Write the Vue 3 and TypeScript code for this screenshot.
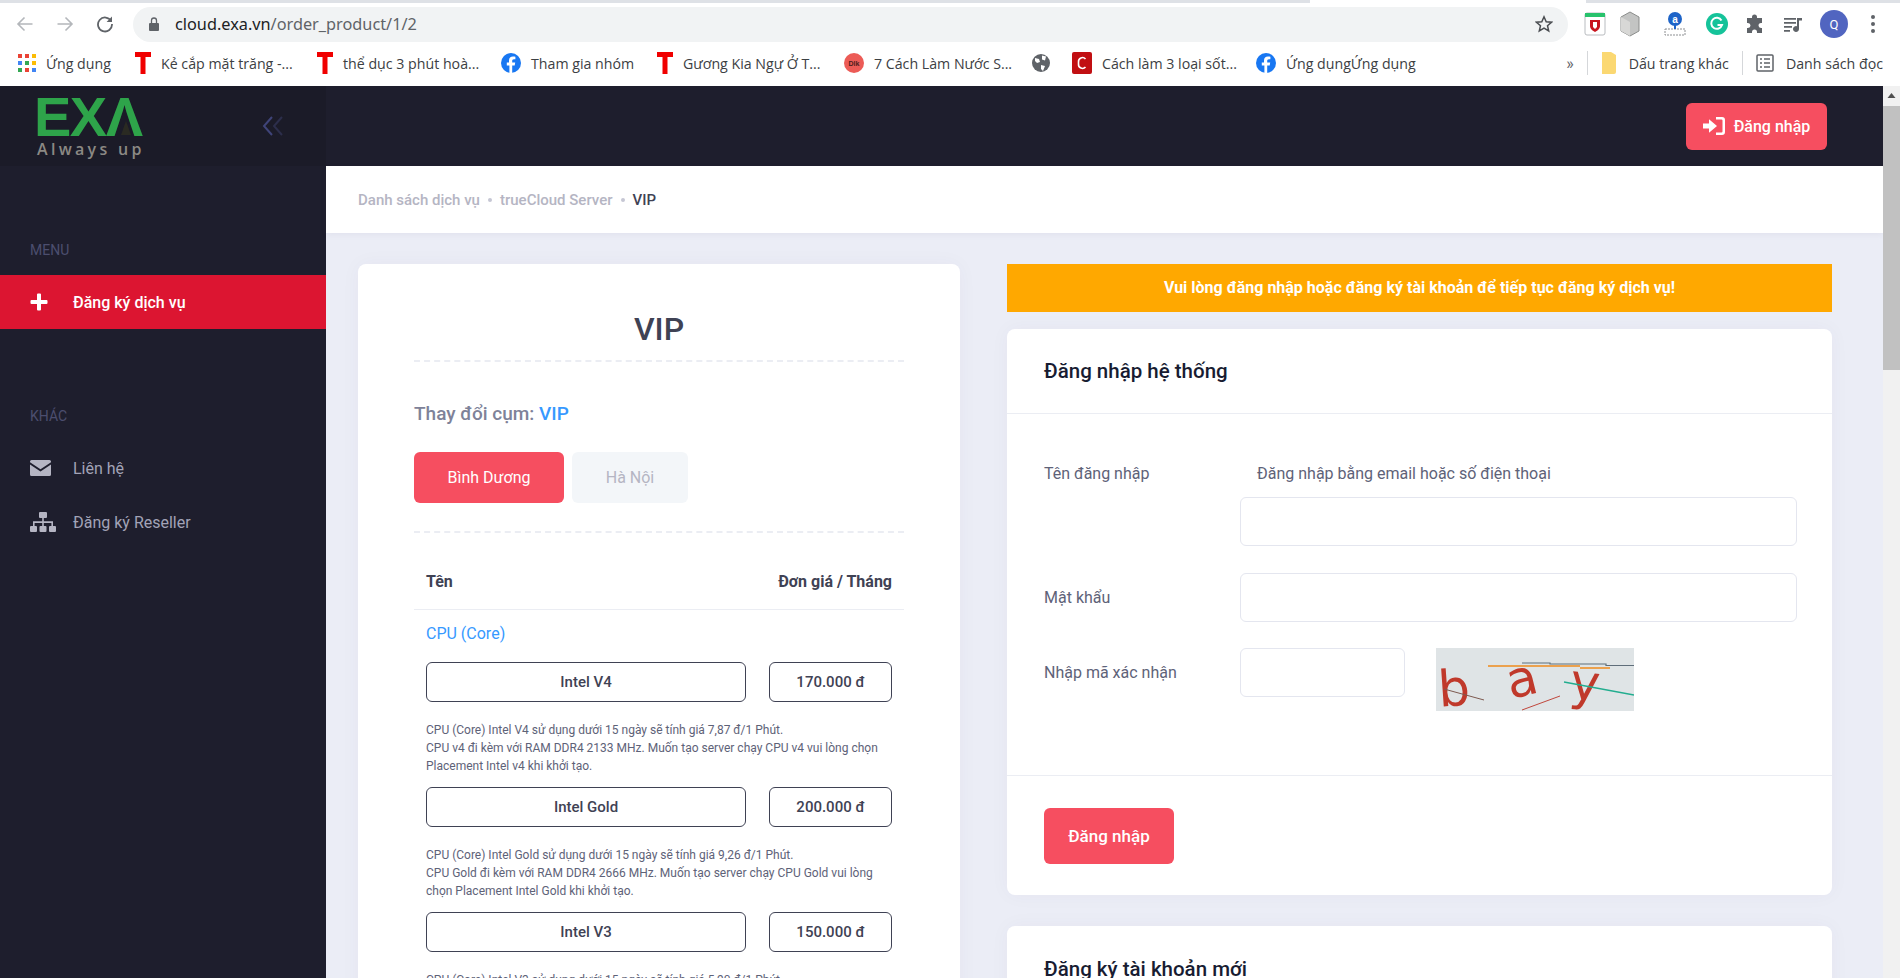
<script setup lang="ts">
type Bookmark = { icon: string; label: string; width: number }
type CpuOption = { name: string; price: string; desc: string[] }

const bookmarks: Bookmark[] = [
  { icon: 'apps', label: 'Ứng dụng', width: 67 },
  { icon: 't', label: 'Kẻ cắp mặt trăng -...', width: 134 },
  { icon: 't', label: 'thể dục 3 phút hoà...', width: 136 },
  { icon: 'fb', label: 'Tham gia nhóm', width: 104 },
  { icon: 't', label: 'Gương Kia Ngự Ở T...', width: 139 },
  { icon: 'dlk', label: '7 Cách Làm Nước S...', width: 136 },
  { icon: 'globe', label: '', width: 0 },
  { icon: 'c', label: 'Cách làm 3 loại sốt...', width: 132 },
  { icon: 'fb', label: 'Ứng dụngỨng dụng', width: 134 },
]

const cpuOptions: CpuOption[] = [
  {
    name: 'Intel V4',
    price: '170.000 đ',
    desc: [
      'CPU (Core) Intel V4 sử dụng dưới 15 ngày sẽ tính giá 7,87 đ/1 Phút.',
      'CPU v4 đi kèm với RAM DDR4 2133 MHz. Muốn tạo server chạy CPU v4 vui lòng chọn Placement Intel v4 khi khởi tạo.',
    ],
  },
  {
    name: 'Intel Gold',
    price: '200.000 đ',
    desc: [
      'CPU (Core) Intel Gold sử dụng dưới 15 ngày sẽ tính giá 9,26 đ/1 Phút.',
      'CPU Gold đi kèm với RAM DDR4 2666 MHz. Muốn tạo server chạy CPU Gold vui lòng chọn Placement Intel Gold khi khởi tạo.',
    ],
  },
  {
    name: 'Intel V3',
    price: '150.000 đ',
    desc: [
      'CPU (Core) Intel V3 sử dụng dưới 15 ngày sẽ tính giá 5,90 đ/1 Phút.',
    ],
  },
]
</script>

<template>
  <div class="window">
    <div class="tabstrip">
      <span class="tab-line"></span>
      <span class="tab-gap"></span>
      <span class="tab-line short"></span>
    </div>

    <div class="toolbar">
      <div class="nav">
        <svg width="18" height="18" viewBox="0 0 18 18" fill="none" stroke="#b4b7bb" stroke-width="1.6">
          <path d="M16.500 9H2M8.500 2.500 2 9l6.500 6.500" />
        </svg>
        <svg width="18" height="18" viewBox="0 0 18 18" fill="none" stroke="#b4b7bb" stroke-width="1.6">
          <path d="M1.500 9H16M9.500 2.500 16 9l-6.500 6.500" />
        </svg>
        <svg width="18" height="18" viewBox="0 0 18 18" fill="none" stroke="#5f6368" stroke-width="1.8">
          <path d="M15.200 6.200A7 7 0 1 0 16 9" />
          <path d="M16 1.500v5.400h-5.400" fill="#5f6368" stroke="none" />
        </svg>
      </div>
      <div class="omnibox">
        <svg width="10" height="14" viewBox="0 0 10 14" fill="#5f6368">
          <path d="M1 6h8a1 1 0 0 1 1 1v6a1 1 0 0 1-1 1H1a1 1 0 0 1-1-1V7a1 1 0 0 1 1-1z" />
          <path d="M2.500 6V3.500a2.500 2.500 0 0 1 5 0V6" fill="none" stroke="#5f6368" stroke-width="1.300" />
        </svg>
        <span class="url"><b>cloud.exa.vn</b>/order_product/1/2</span>
        <svg class="star" width="18" height="18" viewBox="0 0 18 18" fill="none" stroke="#4a4d51" stroke-width="1.500">
          <path d="M9 1.800l2.200 4.900 5.300.5-4 3.500 1.200 5.200L9 13.200l-4.700 2.700 1.200-5.200-4-3.500 5.300-.5z" />
        </svg>
      </div>
      <div class="extensions">
        <svg width="22" height="24" viewBox="0 0 22 24">
          <rect x="1" y="1" width="20" height="22" rx="2" fill="#fff" stroke="#b9bcc0" />
          <rect x="1" y="1" width="20" height="4" fill="#27c26c" />
          <path d="M6 8h10v6c0 3-3 5-5 6-2-1-5-3-5-6z" fill="#c8141e" />
          <path d="M9 10h4v5l-2 2-2-2z" fill="#fff" />
        </svg>
        <svg width="22" height="26" viewBox="0 0 22 26">
          <path d="M11 1l9 5v14l-9 5-9-5V6z" fill="#c3c4c3" stroke="#8b8d8b" />
          <path d="M11 11v14l-9-5V6z" fill="#d8d8d6" />
        </svg>
        <svg width="22" height="26" viewBox="0 0 22 26">
          <circle cx="11" cy="8" r="7" fill="#1e64c8" />
          <text x="11" y="12" text-anchor="middle" class="ext-a">a</text>
          <path d="M1 18h20v6H1z" fill="none" stroke="#8d8f92" stroke-dasharray="2 1" />
          <path d="M11 14v4" stroke="#1e64c8" stroke-width="2" />
        </svg>
        <svg width="22" height="24" viewBox="0 0 22 24">
          <circle cx="11" cy="12" r="11" fill="#15c39a" />
          <path d="M15.500 8.500A5.500 5.500 0 1 0 16 13h-4.500" fill="none" stroke="#fff" stroke-width="2" />
        </svg>
        <svg width="20" height="20" viewBox="0 0 20 20" fill="#5f6368">
          <path d="M7 3a2.500 2.500 0 0 1 5 0v1h5v5h-1a2.500 2.500 0 0 0 0 5h1v5h-5v-1a2.500 2.500 0 0 0-5 0v1H2v-5h1a2.500 2.500 0 0 0 0-5H2V4h5z" />
        </svg>
        <svg width="20" height="20" viewBox="0 0 20 20" fill="#5f6368">
          <path d="M1 4h12v1.800H1zM1 8h12v1.800H1zM1 12h8v1.800H1zM1 16h6v1.800H1z" />
          <path d="M14 4h5v2.500h-3V15a3 3 0 1 1-2-2.800z" />
        </svg>
        <span class="avatar">Q</span>
        <svg width="6" height="20" viewBox="0 0 6 20" fill="#5f6368">
          <circle cx="3" cy="3" r="2" /><circle cx="3" cy="10" r="2" /><circle cx="3" cy="17" r="2" />
        </svg>
      </div>
    </div>

    <div class="bookmarks">
      <div v-for="b in bookmarks" :key="b.label + b.icon" class="bookmark">
        <svg v-if="b.icon === 'apps'" width="18" height="18" viewBox="0 0 18 18">
          <rect x="0" y="0" width="4" height="4" fill="#ea4335" /><rect x="7" y="0" width="4" height="4" fill="#ea4335" /><rect x="14" y="0" width="4" height="4" fill="#fbbc05" />
          <rect x="0" y="7" width="4" height="4" fill="#4285f4" /><rect x="7" y="7" width="4" height="4" fill="#34a853" /><rect x="14" y="7" width="4" height="4" fill="#fbbc05" />
          <rect x="0" y="14" width="4" height="4" fill="#34a853" /><rect x="7" y="14" width="4" height="4" fill="#ea4335" /><rect x="14" y="14" width="4" height="4" fill="#4285f4" />
        </svg>
        <svg v-else-if="b.icon === 't'" width="16" height="22" viewBox="0 0 16 22" fill="#f00000">
          <path d="M0 0h16v5h-5.500v17h-5V5H0z" />
        </svg>
        <svg v-else-if="b.icon === 'fb'" width="20" height="20" viewBox="0 0 20 20">
          <circle cx="10" cy="10" r="10" fill="#1877f2" />
          <path d="M11.200 20v-7.500h2.500l.5-3h-3V8c0-1 .4-1.700 1.800-1.700h1.400V3.700c-.6-.1-1.500-.2-2.400-.2-2.500 0-4 1.500-4 4.100v1.900H5.800v3h2.600V20z" fill="#fff" />
        </svg>
        <svg v-else-if="b.icon === 'dlk'" width="20" height="20" viewBox="0 0 20 20">
          <circle cx="10" cy="10" r="10" fill="#ec5b56" />
          <text x="10" y="13" text-anchor="middle" class="dlk-text">Dlk</text>
        </svg>
        <svg v-else-if="b.icon === 'globe'" width="18" height="18" viewBox="0 0 18 18">
          <circle cx="9" cy="9" r="9" fill="#5f6368" />
          <path d="M3 4l4 1 1 3-3 1-2-2zM10 1.500l4 1-1 4-3-1zM9 11l4 1-2 5-2-2z" fill="#fff" />
        </svg>
        <svg v-else-if="b.icon === 'c'" width="20" height="22" viewBox="0 0 20 22">
          <rect width="20" height="22" rx="2" fill="#c10f12" />
          <path d="M13.500 7a4 4 0 0 0-7 3v2a4 4 0 0 0 7 3" fill="none" stroke="#fff" stroke-width="1.600" />
        </svg>
        <span v-if="b.label" class="bookmark-label" :style="{ width: b.width + 'px' }">{{ b.label }}</span>
      </div>
      <div class="bookmarks-right">
        <span class="more">»</span>
        <span class="sep"></span>
        <svg width="16" height="22" viewBox="0 0 16 22">
          <path d="M1 0h9l5 3v17a2 2 0 0 1-2 2H1z" fill="#fbd872" />
        </svg>
        <span class="bookmark-label">Dấu trang khác</span>
        <span class="sep"></span>
        <svg width="18" height="18" viewBox="0 0 18 18" fill="none" stroke="#5f6368" stroke-width="1.500">
          <rect x="1" y="1" width="16" height="16" rx="1" />
          <path d="M4 5h2M8 5h6M4 9h2M8 9h6M4 13h2M8 13h6" />
        </svg>
        <span class="bookmark-label">Danh sách đọc</span>
      </div>
    </div>

    <div class="viewport">
      <aside class="sidebar">
        <div class="brand">
          <div class="logo">
            <span class="logo-mark">EXΛ</span>
            <span class="logo-peak"></span>
            <span class="logo-tag">Always up</span>
          </div>
          <svg width="22" height="20" viewBox="0 0 22 20" fill="none" stroke-width="2">
            <path d="M10 1 2 10l8 9" stroke="#3f4479" />
            <path d="M20 1l-8 9 8 9" stroke="#2c2e4b" />
          </svg>
        </div>
        <nav class="side-nav">
          <div class="section-title first">MENU</div>
          <a class="side-item active">
            <svg width="18" height="18" viewBox="0 0 18 18" fill="#fff">
              <path d="M7 1.500a1 1 0 0 1 1-1h2a1 1 0 0 1 1 1V7h5.500a1 1 0 0 1 1 1v2a1 1 0 0 1-1 1H11v5.500a1 1 0 0 1-1 1H8a1 1 0 0 1-1-1V11H1.500a1 1 0 0 1-1-1V8a1 1 0 0 1 1-1H7z" />
            </svg>
            <span>Đăng ký dịch vụ</span>
          </a>
          <div class="section-title second">KHÁC</div>
          <a class="side-item">
            <svg width="21" height="16" viewBox="0 0 21 16" fill="#b5b5c3">
              <path d="M1.500 0h18A1.500 1.500 0 0 1 21 1.500v.7l-10.500 7L0 2.200v-.7A1.500 1.500 0 0 1 1.500 0z" />
              <path d="M0 4.400l10.500 7 10.500-7v10.100a1.500 1.500 0 0 1-1.500 1.500h-18A1.500 1.500 0 0 1 0 14.500z" />
            </svg>
            <span>Liên hệ</span>
          </a>
          <a class="side-item">
            <svg width="26" height="20" viewBox="0 0 26 20" fill="#b5b5c3">
              <rect x="9" y="0" width="8" height="6" rx="1" />
              <rect x="0" y="14" width="7" height="6" rx="1" />
              <rect x="9.500" y="14" width="7" height="6" rx="1" />
              <rect x="19" y="14" width="7" height="6" rx="1" />
              <path d="M12.200 6h1.600v3.300H23v4.700h-1.600v-3.100h-7.600V14h-1.600v-3.100H4.600V14H3V9.300h9.200z" />
            </svg>
            <span>Đăng ký Reseller</span>
          </a>
        </nav>
      </aside>

      <div class="page">
        <header class="topbar">
          <button class="btn-login-top">
            <svg width="22" height="18" viewBox="0 0 22 18" fill="#fff">
              <path d="M0 6.500h6V2.200L14 9l-8 6.800v-4.300H0z" />
              <path d="M13 0h6a3 3 0 0 1 3 3v12a3 3 0 0 1-3 3h-6v-2.500h5.500a1 1 0 0 0 1-1v-11a1 1 0 0 0-1-1H13z" />
            </svg>
            Đăng nhập
          </button>
        </header>

        <div class="breadcrumb">
          <span class="crumb">Danh sách dịch vụ</span>
          <i class="dot"></i>
          <span class="crumb">trueCloud Server</span>
          <i class="dot"></i>
          <span class="crumb current">VIP</span>
        </div>

        <div class="content">
          <section class="card product">
            <h1 class="product-title">VIP</h1>
            <div class="cluster">Thay đổi cụm: <span class="blue">VIP</span></div>
            <div class="regions">
              <button class="region active">Bình Dương</button>
              <button class="region">Hà Nội</button>
            </div>
            <div class="table-head">
              <span>Tên</span>
              <span>Đơn giá / Tháng</span>
            </div>
            <div class="group-name">CPU (Core)</div>
            <div v-for="opt in cpuOptions" :key="opt.name" class="option">
              <div class="option-row">
                <div class="option-name">{{ opt.name }}</div>
                <div class="option-price">{{ opt.price }}</div>
              </div>
              <p class="option-desc">
                <template v-for="line in opt.desc" :key="line">{{ line }}<br /></template>
              </p>
            </div>
          </section>

          <div class="side-col">
            <div class="notice">Vui lòng đăng nhập hoặc đăng ký tài khoản để tiếp tục đăng ký dịch vụ!</div>

            <section class="card login">
              <div class="card-head">Đăng nhập hệ thống</div>
              <div class="form">
                <div class="form-row first-row">
                  <label>Tên đăng nhập</label>
                  <div class="field">
                    <div class="hint">Đăng nhập bằng email hoặc số điện thoại</div>
                    <input class="input" type="text" />
                  </div>
                </div>
                <div class="form-row second-row">
                  <label>Mật khẩu</label>
                  <div class="field"><input class="input" type="password" /></div>
                </div>
                <div class="form-row captcha-row">
                  <label>Nhập mã xác nhận</label>
                  <input class="input captcha-input" type="text" />
                  <svg class="captcha" width="198" height="63" viewBox="0 0 198 63">
                    <rect width="198" height="63" fill="#dfe4e6" />
                    <text x="2" y="58" class="cap-letter" transform="rotate(-4 15 40)">b</text>
                    <text x="70" y="47" class="cap-letter" transform="rotate(-14 90 30)">a</text>
                    <text x="135" y="52" class="cap-letter" transform="rotate(6 150 30)">y</text>
                    <path d="M86 15h28v1h56v1.500h28" fill="none" stroke="#5f6e7a" stroke-width="1.200" />
                    <path d="M52 18h92M144 20h30" stroke="#f08a1c" stroke-width="1.400" />
                    <path d="M128 34l70 13" stroke="#22ad8f" stroke-width="1.300" />
                    <path d="M8 41l40 11" stroke="#7d5a50" stroke-width="1" />
                    <path d="M86 62l38-14" stroke="#c0473c" stroke-width="1" />
                  </svg>
                </div>
              </div>
              <div class="card-foot">
                <button class="btn-login">Đăng nhập</button>
              </div>
            </section>

            <section class="card register">
              <div class="card-head">Đăng ký tài khoản mới</div>
            </section>
          </div>
        </div>
      </div>

      <div class="scrollbar">
        <svg class="scroll-arrow" width="17" height="20" viewBox="0 0 17 20">
          <path d="M8.500 7 4.500 12h8z" fill="#505050" />
        </svg>
        <div class="scroll-thumb"></div>
      </div>
    </div>
  </div>
</template>

<style>
html,
body {
  margin: 0;
  height: 100%;
  overflow: hidden;
}
</style>

<style scoped>
.window {
  width: 1900px;
  height: 978px;
  display: flex;
  flex-direction: column;
  overflow: hidden;
  background: #fff;
  font-family: Roboto, "Liberation Sans", sans-serif;
}

/* browser chrome */
.tabstrip {
  display: flex;
  height: 3px;
  padding-bottom: 1px;
}
.tab-line {
  flex: 1;
  background: #dee1e6;
}
.tab-line.short {
  flex: 0 0 314px;
}
.tab-gap {
  flex: 0 0 276px;
}

.toolbar {
  display: flex;
  align-items: center;
  height: 40px;
  padding: 0 0 0 16px;
}
.nav {
  display: flex;
  gap: 22px;
  width: 117px;
}
.omnibox {
  width: 1435px;
  height: 35px;
  box-sizing: border-box;
  display: flex;
  align-items: center;
  padding: 0 15px 0 16px;
  border-radius: 18px;
  background: #f1f3f4;
}
.url {
  margin-left: 16px;
  font: 16.300px "Noto Sans", sans-serif;
  color: #5f6368;
}
.url b {
  font-weight: 400;
  color: #202124;
}
.star {
  margin-left: auto;
}
.extensions {
  display: flex;
  align-items: center;
  padding-left: 16px;
}
.extensions > :nth-child(2) { margin-left: 13px; }
.extensions > :nth-child(3) { margin-left: 23px; }
.extensions > :nth-child(4) { margin-left: 20px; }
.extensions > :nth-child(5) { margin-left: 17px; }
.extensions > :nth-child(6) { margin-left: 18px; }
.extensions > :nth-child(7) { margin-left: 17px; }
.extensions > :nth-child(8) { margin-left: 22px; }
.ext-a {
  font: 700 10px "Liberation Sans", sans-serif;
  fill: #fff;
}
.dlk-text {
  font: 700 7px "Liberation Sans", sans-serif;
  fill: #4a1d1b;
}
.avatar {
  width: 28px;
  height: 28px;
  border-radius: 50%;
  display: flex;
  align-items: center;
  justify-content: center;
  background: #5165c0;
  color: #fff;
  font-size: 13px;
}

.bookmarks {
  display: flex;
  align-items: center;
  height: 42px;
  padding: 0 17px 4px 18px;
  box-sizing: border-box;
}
.bookmark {
  display: flex;
  align-items: center;
  gap: 10px;
  margin-right: 22px;
}
.bookmark-label {
  font: 14.200px "Open Sans", sans-serif;
  color: #3c4043;
  white-space: nowrap;
}
.bookmarks-right {
  margin-left: auto;
  display: flex;
  align-items: center;
  gap: 12px;
}
.more {
  font-size: 16px;
  color: #5f6368;
}
.sep {
  width: 1px;
  height: 24px;
  background: #d5d7da;
  margin: 0 1px;
}

.viewport {
  flex: 1;
  display: flex;
  min-height: 0;
}

/* sidebar */
.sidebar {
  flex: 0 0 326px;
  background: #1e1e2d;
}
.brand {
  height: 80px;
  box-sizing: border-box;
  padding: 0 42px 0 37px;
  display: flex;
  align-items: center;
  justify-content: space-between;
  background: #1b1b28;
}
.logo {
  position: relative;
  display: flex;
  flex-direction: column;
  width: 106px;
}
.logo-mark {
  margin-left: -3px;
  font: 700 56px/44px "Liberation Sans", sans-serif;
  letter-spacing: -1.500px;
  color: #2ea44a;
  white-space: nowrap;
}
.logo-peak {
  position: absolute;
  left: 84px;
  top: 26px;
  border-left: 5px solid transparent;
  border-right: 5px solid transparent;
  border-bottom: 14px solid #2a2a22;
}
.logo-tag {
  margin-top: 1px;
  font: 600 16px/18px "Open Sans", sans-serif;
  letter-spacing: 3.300px;
  color: #8b8984;
  white-space: nowrap;
}
.section-title {
  padding-left: 30px;
  font-size: 14px;
  line-height: 18px;
  color: #4c4e6f;
}
.section-title.first {
  margin-top: 75px;
  margin-bottom: 16px;
}
.section-title.second {
  margin-top: 78px;
  margin-bottom: 16px;
}
.side-item {
  display: flex;
  align-items: center;
  height: 54px;
  padding-left: 30px;
  font-size: 16px;
  color: #a2a3b7;
}
.side-item svg {
  flex: 0 0 auto;
}
.side-item span {
  position: absolute;
  margin-left: 43px;
}
.side-item.active {
  background: #dc1531;
  color: #fff;
  font-weight: 500;
}

/* page */
.page {
  flex: 1;
  min-width: 0;
  background: #ebedf6;
  display: flex;
  flex-direction: column;
}
.topbar {
  flex: 0 0 80px;
  background: #1e1e2d;
  display: flex;
  align-items: center;
  justify-content: flex-end;
  padding: 0 56px 0 0;
  box-sizing: border-box;
}
.btn-login-top {
  width: 141px;
  height: 47px;
  border: 0;
  border-radius: 6px;
  background: #f64e60;
  color: #fff;
  font: 500 16px Roboto, sans-serif;
  display: flex;
  align-items: center;
  justify-content: center;
  gap: 9px;
}
.breadcrumb {
  flex: 0 0 67px;
  box-sizing: border-box;
  background: #fff;
  display: flex;
  align-items: center;
  gap: 8px;
  padding: 1px 0 0 32px;
  box-shadow: 0 2px 6px rgba(82, 63, 105, 0.06);
  font-size: 15px;
  font-weight: 500;
}
.crumb {
  color: #b5b5c3;
}
.crumb.current {
  color: #3f4254;
}
.dot {
  width: 4px;
  height: 4px;
  border-radius: 50%;
  background: #c6c7d4;
}

.content {
  flex: 1;
  min-height: 0;
  overflow: hidden;
  display: flex;
  align-items: flex-start;
  gap: 47px;
  padding: 31px 51px 0 32px;
}
.card {
  background: #fff;
  border-radius: 8px;
  box-shadow: 0 0 20px rgba(82, 63, 105, 0.04);
}

/* left card */
.product {
  flex: 0 0 602px;
  box-sizing: border-box;
  padding: 0 56px 40px;
}
.product-title {
  margin: 0;
  height: 98px;
  line-height: 131px;
  box-sizing: border-box;
  border-bottom: 2px dashed #ebedf3;
  text-align: center;
  font-size: 32px;
  font-weight: 500;
  color: #3f4254;
}
.cluster {
  margin-top: 38px;
  font-size: 19px;
  font-weight: 500;
  line-height: 28px;
  color: #7e8299;
}
.blue {
  color: #3699ff;
}
.regions {
  display: flex;
  gap: 8px;
  margin-top: 24px;
  padding-bottom: 28px;
  border-bottom: 2px dashed #ebedf3;
}
.region {
  width: 116px;
  height: 51px;
  border: 0;
  border-radius: 6px;
  background: #f3f6f9;
  color: #b5b5c3;
  font: 16px Roboto, sans-serif;
}
.region.active {
  width: 150px;
  background: #f64e60;
  color: #fff;
}
.table-head {
  display: flex;
  justify-content: space-between;
  height: 77px;
  padding: 0 12px 18px;
  box-sizing: border-box;
  align-items: flex-end;
  border-bottom: 1px solid #ebedf3;
  font-size: 16px;
  line-height: 18px;
  font-weight: 700;
  color: #3f4254;
}
.group-name {
  padding: 15px 12px 0;
  font-size: 16px;
  line-height: 18px;
  color: #3699ff;
}
.option {
  padding: 0 12px;
}
.group-name + .option {
  margin-top: 19px;
}
.option-row {
  display: flex;
  justify-content: space-between;
}
.option-name,
.option-price {
  box-sizing: border-box;
  height: 40px;
  display: flex;
  align-items: center;
  justify-content: center;
  border: 1px solid #3f4254;
  border-radius: 6px;
  font-size: 15px;
  font-weight: 500;
  color: #3f4254;
}
.option-name {
  width: 320px;
}
.option-price {
  width: 123px;
}
.option-desc {
  margin: 0;
  padding: 19px 0 12px;
  font-size: 12px;
  line-height: 18px;
  color: #5e6278;
}

/* right column */
.side-col {
  flex: 1;
  min-width: 0;
}
.notice {
  height: 48px;
  line-height: 48px;
  text-align: center;
  background: #ffa800;
  color: #fff;
  font-size: 16px;
  font-weight: 700;
}
.login {
  margin-top: 17px;
}
.card-head {
  height: 85px;
  box-sizing: border-box;
  padding: 0 37px;
  display: flex;
  align-items: center;
  font-size: 20.500px;
  font-weight: 500;
  color: #181c32;
  border-bottom: 1px solid #ebedf3;
}
.form {
  height: 361px;
  box-sizing: border-box;
  padding: 50px 35px 0 37px;
}
.form-row {
  display: flex;
  align-items: center;
  margin-bottom: 27px;
}
.form-row.second-row {
  margin-bottom: 26px;
}
.form-row.first-row {
  align-items: flex-start;
}
.form-row label {
  flex: 0 0 196px;
  font-size: 16px;
  color: #5e6278;
}
.first-row label {
  line-height: 20px;
}
.field {
  flex: 1;
}
.hint {
  padding-left: 17px;
  margin-bottom: 13px;
  line-height: 20px;
  font-size: 16px;
  color: #5e6278;
}
.input {
  display: block;
  width: 100%;
  height: 49px;
  box-sizing: border-box;
  border: 1px solid #e4e6ef;
  border-radius: 6px;
  background: #fff;
  outline: none;
}
.captcha-row {
  align-items: flex-start;
}
.captcha-row label {
  line-height: 49px;
}
.captcha-input {
  width: 165px;
}
.captcha {
  margin-left: 31px;
}
.cap-letter {
  font: 50px "DejaVu Sans", sans-serif;
  fill: #c0392b;
}
.card-foot {
  height: 120px;
  box-sizing: border-box;
  padding: 32px 37px 0;
  border-top: 1px solid #ebedf3;
}
.btn-login {
  width: 130px;
  height: 56px;
  border: 0;
  border-radius: 6px;
  background: #f64e60;
  color: #fff;
  font: 500 17px Roboto, sans-serif;
}
.register {
  margin-top: 31px;
  height: 200px;
}
.register .card-head {
  border: 0;
}

.scrollbar {
  flex: 0 0 17px;
  background: #f1f1f1;
}
.scroll-arrow {
  display: block;
}
.scroll-thumb {
  height: 264px;
  background: #c1c1c1;
}
</style>
